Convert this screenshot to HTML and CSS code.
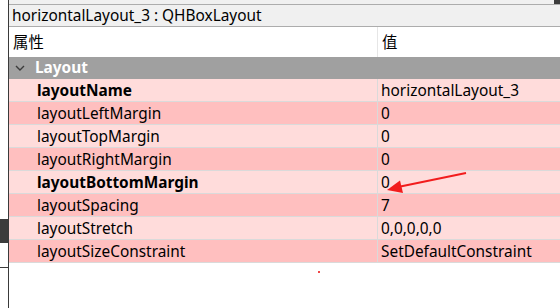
FILE: index.html
```html
<!DOCTYPE html>
<html lang="zh-CN">
<head>
  <meta charset="UTF-8" />
  <title>Property Editor</title>
  <link rel="stylesheet" href="styles.css">
</head>
<body>
  <div class="side">
    <div class="side-block"></div>
    <div class="side-rule"></div>
  </div>

  <div class="editor">
    <div class="top-edge"></div>
    <div class="object-name">horizontalLayout_3 : QHBoxLayout</div>

    <div class="grid">
      <div class="head">属性</div>
      <div class="head val">值</div>

      <div class="group">
        <svg class="chev" width="10" height="6" viewBox="0 0 10 6">
          <polyline points="1,1 5,5 9,1" fill="none" stroke="#3c3c3c" stroke-width="1.4"/>
        </svg>
        Layout
      </div>

      <div class="cell name light bold">layoutName</div>
      <div class="cell val light">horizontalLayout_3</div>
      <div class="cell name dark">layoutLeftMargin</div>
      <div class="cell val dark">0</div>
      <div class="cell name light">layoutTopMargin</div>
      <div class="cell val light">0</div>
      <div class="cell name dark">layoutRightMargin</div>
      <div class="cell val dark">0</div>
      <div class="cell name light bold">layoutBottomMargin</div>
      <div class="cell val light">0</div>
      <div class="cell name dark">layoutSpacing</div>
      <div class="cell val dark">7</div>
      <div class="cell name light">layoutStretch</div>
      <div class="cell val light">0,0,0,0,0</div>
      <div class="cell name dark">layoutSizeConstraint</div>
      <div class="cell val dark">SetDefaultConstraint</div>
    </div>
  </div>

  <!-- annotation drawn over the screenshot -->
  <svg class="arrow" width="560" height="308" viewBox="0 0 560 308">
    <line x1="466" y1="173" x2="398" y2="187" stroke="#f21d1d" stroke-width="2"/>
    <polygon points="387,190 400,180.5 403,193" fill="#f21d1d"/>
    <rect x="318" y="271" width="2" height="2" fill="#f04848"/>
  </svg>
</body>
</html>
```

FILE: styles.css
```css
body {
  margin: 0;
  width: 560px;
  height: 308px;
  overflow: hidden;
  display: flex;
  background: #fff;
  font-family: "Noto Sans", "Noto Sans CJK SC", sans-serif;
  font-size: 15.4px;
  color: #000;
}

.side {
  width: 8px;
  border-right: 1px solid #3a3a3a;
  background: #fff;
  display: flex;
  flex-direction: column;
}

.side-block {
  margin-top: 219px;
  height: 24px;
  background: #3c3c3c;
}

.side-rule {
  margin-top: 24px;
  border-top: 1px solid #3a3a3a;
}

.editor {
  flex: 1;
  display: flex;
  flex-direction: column;
}

.top-edge {
  height: 4px;
  background: linear-gradient(to right, #f0f0f0 545px, #3c3c3c 545px);
}

.object-name {
  height: 21px;
  line-height: 22px;
  padding-left: 3px;
  background: #f0f0f0;
  border-top: 1px solid #acacac;
  border-bottom: 1px solid #acacac;
  white-space: nowrap;
}

.grid {
  display: grid;
  grid-template-columns: 368px 1fr;
}

.head {
  height: 30px;
  line-height: 31px;
  padding-left: 4px;
  background: #fff;
}

.head.val {
  border-left: 1px solid #e6e6e6;
}

.group {
  grid-column: 1 / 3;
  height: 22px;
  line-height: 22px;
  background: #a0a0a0;
  color: #fff;
  font-weight: bold;
  display: flex;
  align-items: center;
  gap: 10px;
  padding-left: 6px;
}

.cell {
  height: 22px;
  line-height: 24px;
  border-bottom: 1px solid #dadada;
  white-space: nowrap;
  overflow: hidden;
}

.cell.name {
  padding-left: 28px;
}

.cell.val {
  padding-left: 3px;
  border-left: 1px solid #dadada;
}

.light {
  background: #ffdcdb;
}

.dark {
  background: #ffbfbf;
}

.bold {
  font-weight: bold;
}

.arrow {
  position: absolute;
  left: 0;
  top: 0;
  pointer-events: none;
}
```
